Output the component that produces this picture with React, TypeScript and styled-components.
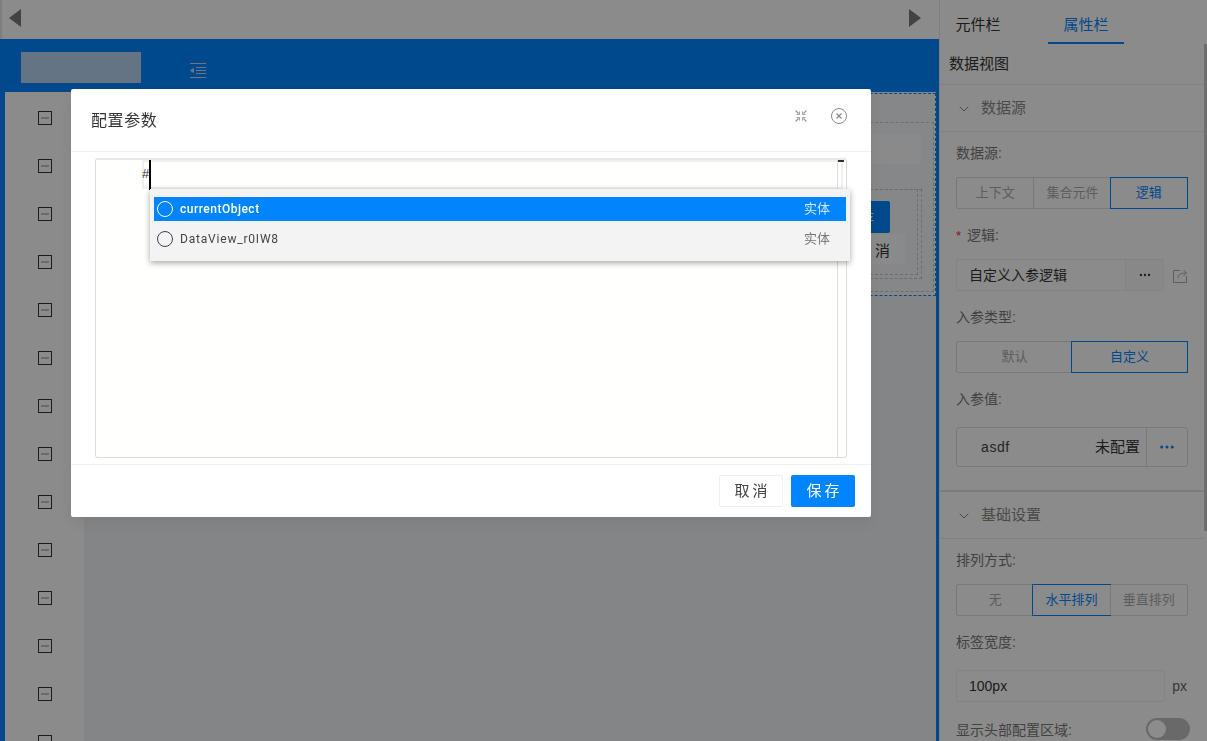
import React from 'react';
import styled, { createGlobalStyle } from 'styled-components';
import { ChevronDown, Ellipsis } from 'lucide-react';

const Global = createGlobalStyle`
    html,body{
        margin:0;
        padding:0;
        height:100%;
        overflow:hidden;
        background:#fff;
        font-family:"Liberation Sans","Noto Sans CJK SC",sans-serif;
        font-size:13px;
        color:#333;
    }
`
const Page = styled.div`
    display:flex;
    width:1207px;
    height:741px;
    overflow:hidden;
`
const Main = styled.div`
    width:939px;
    display:flex;
    flex-direction:column;
    flex-shrink:0;
`
const TopBar = styled.div`
    height:39px;
    flex-shrink:0;
    display:flex;
    align-items:center;
    justify-content:space-between;
    padding:0 18px 3px 7px;
    background:#fefefe;
    border-left:2px solid #e6e6e6;
    box-sizing:border-box;
`
const Arrow = styled.i<{ dir: 'left' | 'right' }>`
    width:0;
    height:0;
    border-top:9px solid transparent;
    border-bottom:9px solid transparent;
    border-${props => (props.dir === 'left' ? 'right' : 'left')}:12px solid #7a7a7a;
`
const Stage = styled.div`
    flex:1;
    display:flex;
    flex-direction:column;
    background:#0085ff;
    padding:0 3px 0 2px;
    min-height:0;
`
const Head = styled.div`
    height:53px;
    flex-shrink:0;
    display:flex;
    align-items:center;
    padding:0 0 0 19px;
`
const Logo = styled.div`
    width:120px;
    height:31px;
    background:#b6d4f0;
    margin-top:4px;
`
const Fold = styled.svg`
    margin-left:49px;
    margin-top:9px;
`
const Body = styled.div`
    flex:1;
    display:flex;
    min-height:0;
    padding-left:3px;
`
const Rail = styled.div`
    width:79px;
    flex-shrink:0;
    background:#fefefe;
    display:flex;
    flex-direction:column;
    align-items:center;
    gap:34px;
    padding:19px 0 0 0;
    box-sizing:border-box;
    overflow:hidden;
`
const Collapse = styled.div`
    width:14px;
    height:14px;
    flex-shrink:0;
    border:1px solid #333;
    box-sizing:border-box;
    display:flex;
    align-items:center;
    justify-content:center;
    &::after{
        content:'';
        width:8px;
        height:2px;
        background:#c4c4c4;
    }
`
const Canvas = styled.div`
    flex:1;
    background:#f0f3f5;
    min-width:0;
`
const Side = styled.div`
    flex:1;
    display:flex;
    flex-direction:column;
    background:#fefefe;
    border-left:1px solid #e8e8e8;
    min-width:0;
    position:relative;
`
const Tabs = styled.div`
    display:flex;
    height:44px;
    flex-shrink:0;
`
const Tab = styled.div<{ active?: boolean }>`
    width:76px;
    margin-left:${props => (props.active ? '32px' : '0')};
    height:44px;
    box-sizing:border-box;
    text-align:center;
    line-height:50px;
    font-size:15px;
    color:${props => (props.active ? '#0085ff' : '#333')};
    border-bottom:${props => (props.active ? '2px solid #0085ff' : 'none')};
`
const ViewName = styled.div`
    height:40px;
    line-height:40px;
    padding-left:9px;
    font-size:15px;
    color:#333;
    flex-shrink:0;
`
const Section = styled.div<{ thick?: boolean }>`
    border-top:${props => (props.thick ? '2px solid #e2e2e2' : '1px solid #ececec')};
    margin-right:3px;
    flex-shrink:0;
`
const SectionHead = styled.div`
    height:47px;
    display:flex;
    align-items:center;
    padding:0 0 3px 16px;
    gap:9px;
    font-size:15px;
    color:#888;
    border-bottom:1px solid #ececec;
    box-sizing:border-box;
    & svg{
        margin-top:5px;
    }
`
const SectionBody = styled.div`
    padding:0 16px 0 16px;
`
const Label = styled.div`
    line-height:20px;
    height:20px;
    margin:16px 0 14px;
    font-size:14px;
    color:#777;
    &:first-child{
        margin-top:11px;
    }
`
const Segments = styled.div`
    display:flex;
    height:32px;
    border:1px solid #ddd;
    border-radius:2px;
    box-sizing:border-box;
`
const Segment = styled.div<{ active?: boolean }>`
    flex:1;
    margin:${props => (props.active ? '-1px' : '0')};
    border:${props => (props.active ? '1px solid #0085ff' : 'none')};
    border-left:1px solid ${props => (props.active ? '#0085ff' : '#ddd')};
    &:first-child{
        border-left:none;
    }
    text-align:center;
    line-height:30px;
    font-size:13px;
    color:${props => (props.active ? '#0085ff' : '#aaa')};
    position:relative;
`
const LogicRow = styled.div`
    display:flex;
    align-items:center;
`
const LogicInput = styled.div`
    width:208px;
    height:32px;
    display:flex;
    border:1px solid #eee;
    border-radius:2px;
    box-sizing:border-box;
`
const LogicText = styled.div`
    flex:1;
    padding-left:12px;
    line-height:30px;
    font-size:14px;
    color:#333;
`
const LogicBtn = styled.div`
    width:37px;
    background:#f7f7f7;
    border-left:1px solid #eee;
    display:flex;
    align-items:center;
    justify-content:center;
    color:#333;
`
const Share = styled.svg`
    margin-left:8px;
    margin-top:1px;
`
const Required = styled.span`
    color:#f5222d;
    margin-right:6px;
    font-size:13px;
`
const ParamBox = styled.div`
    height:40px;
    display:flex;
    border:1px solid #ddd;
    border-radius:3px;
    box-sizing:border-box;
    margin:18px 0 23px;
`
const ParamName = styled.div`
    flex:1;
    padding-left:24px;
    line-height:38px;
    font-size:14px;
    letter-spacing:.6px;
    color:#444;
`
const ParamState = styled.div`
    padding-right:6px;
    line-height:38px;
    font-size:15px;
    color:#333;
`
const ParamBtn = styled.div`
    width:40px;
    border-left:1px solid #ddd;
    display:flex;
    align-items:center;
    justify-content:center;
    color:#0085ff;
`
const UnitRow = styled.div`
    display:flex;
    align-items:center;
    justify-content:space-between;
    margin-top:18px;
`
const UnitInput = styled.div`
    width:209px;
    height:32px;
    border:1px solid #eee;
    border-radius:2px;
    box-sizing:border-box;
    padding-left:12px;
    line-height:30px;
    font-size:14px;
    color:#333;
`
const Unit = styled.span`
    font-size:14px;
    color:#666;
    padding-right:1px;
`
const SwitchRow = styled.div`
    display:flex;
    align-items:center;
    justify-content:space-between;
    height:22px;
    margin-top:16px;
    font-size:14px;
    color:#777;
`
const Toggle = styled.div`
    width:44px;
    height:22px;
    border-radius:11px;
    background:#bfbfbf;
    padding:2px;
    box-sizing:border-box;
    margin-right:-2px;
    &::after{
        content:'';
        display:block;
        width:18px;
        height:18px;
        border-radius:50%;
        background:#fff;
    }
`
const Scroll = styled.div`
    position:absolute;
    right:0;
    top:44px;
    width:3px;
    height:487px;
    background:#c9c9c9;
`
const Backdrop = styled.div`
    position:fixed;
    inset:0;
    background:rgba(0,0,0,.45);
`
const Ghost = styled.div`
    position:absolute;
    left:860px;
    top:93px;
    width:76px;
    height:203px;
    background:#f5f6f7;
    border:1px dashed #0085ff;
    border-left:none;
    box-sizing:border-box;
`
const GhostFrame = styled.div`
    position:absolute;
    left:0;
    top:28px;
    width:74px;
    height:170px;
    border:1px dashed #c9c9c9;
    border-left:none;
    box-sizing:border-box;
`
const GhostField = styled.div`
    position:absolute;
    left:0;
    top:40px;
    width:61px;
    height:30px;
    background:#fbfbfb;
`
const GhostBox = styled.div<{ inner?: boolean }>`
    position:absolute;
    left:0;
    top:95px;
    width:${props => (props.inner ? '58px' : '62px')};
    height:${props => (props.inner ? '86px' : '90px')};
    border:1px dashed #c9c9c9;
    border-left:none;
    box-sizing:border-box;
`
const GhostPrimary = styled.div`
    position:absolute;
    left:0;
    top:107px;
    width:30px;
    height:32px;
    padding-right:16px;
    box-sizing:border-box;
    display:flex;
    align-items:center;
    justify-content:flex-end;
    background:#0085ff;
    border-radius:0 2px 2px 0;
    color:#fff;
    font-size:14px;
    white-space:nowrap;
`
const GhostCancel = styled.div`
    position:absolute;
    left:0;
    top:140px;
    width:45px;
    height:30px;
    padding-right:15px;
    box-sizing:border-box;
    display:flex;
    align-items:center;
    justify-content:flex-end;
    background:#fbfbfb;
    color:#333;
    font-size:15px;
    white-space:nowrap;
`
const Modal = styled.div`
    position:fixed;
    left:71px;
    top:89px;
    width:800px;
    height:428px;
    background:#fff;
    border-radius:2px;
    box-shadow:0 6px 16px rgba(0,0,0,.08);
    display:flex;
    flex-direction:column;
`
const ModalHead = styled.div`
    height:63px;
    flex-shrink:0;
    box-sizing:border-box;
    display:flex;
    align-items:center;
    justify-content:space-between;
    padding:0 24px 0 20px;
    border-bottom:1px solid #f0f0f0;
`
const ModalTitle = styled.div`
    font-size:16px;
    letter-spacing:.6px;
    color:#333;
    margin-top:-2px;
`
const ModalTools = styled.div`
    display:flex;
    align-items:center;
    gap:24px;
    margin-top:-8px;
`
const ModalBody = styled.div`
    flex:1;
    padding:6px 24px;
    min-height:0;
    position:relative;
`
const Editor = styled.div`
    height:100%;
    border:1px solid #ddd;
    border-top:2px solid #e8e8e8;
    border-radius:3px;
    box-sizing:border-box;
    background:#fffffd;
    display:flex;
`
const Gutter = styled.div`
    width:46px;
    flex-shrink:0;
`
const CodeArea = styled.div`
    flex:1;
    min-width:0;
`
const ActiveLine = styled.div`
    height:29px;
    margin-right:-6px;
    background:#fffffd;
    border:2px solid #f0f0f0;
    border-top-width:2px;
    box-sizing:border-box;
    display:flex;
    align-items:center;
    font-size:13px;
    color:#333;
`
const Caret = styled.i`
    display:block;
    width:2px;
    height:30px;
    background:#000;
    margin-left:-1px;
    flex-shrink:0;
`
const Hash = styled.span`
    width:8px;
    margin:-3px 0 0 -2px;
    font-size:13px;
    flex-shrink:0;
`
const MiniRail = styled.div`
    width:8px;
    flex-shrink:0;
    border-left:1px solid #ddd;
    position:relative;
    &::before{
        content:'';
        position:absolute;
        left:0;
        top:0;
        width:6px;
        height:2px;
        background:#333;
    }
`
const Suggest = styled.div`
    position:absolute;
    left:79px;
    top:37px;
    width:700px;
    height:72px;
    box-sizing:border-box;
    padding:8px 4px 0 4px;
    background:#f3f3f3;
    box-shadow:0 2px 6px rgba(0,0,0,.35);
`
const Option = styled.div<{ active?: boolean }>`
    height:24px;
    display:flex;
    align-items:center;
    padding:0 16px 0 3px;
    margin-bottom:6px;
    background:${props => (props.active ? '#0085ff' : 'transparent')};
    color:${props => (props.active ? '#fff' : '#444')};
`
const OptionIcon = styled.i<{ active?: boolean }>`
    width:16px;
    height:16px;
    border-radius:50%;
    border:1px solid ${props => (props.active ? '#fff' : '#3c3f52')};
    box-sizing:border-box;
    margin-right:7px;
    flex-shrink:0;
`
const OptionName = styled.span<{ active?: boolean }>`
    flex:1;
    font-family:Roboto,"Liberation Sans",sans-serif;
    font-size:12px;
    font-weight:${props => (props.active ? 500 : 400)};
    letter-spacing:${props => (props.active ? '.5px' : '.8px')};
`
const OptionType = styled.span<{ active?: boolean }>`
    font-size:13px;
    margin-top:-3px;
    color:${props => (props.active ? '#cfe7ff' : '#777')};
`
const ModalFoot = styled.div`
    height:53px;
    flex-shrink:0;
    box-sizing:border-box;
    display:flex;
    justify-content:flex-end;
    align-items:center;
    gap:8px;
    padding:0 16px 0 0;
    border-top:1px solid #f0f0f0;
`
const FootBtn = styled.div<{ primary?: boolean }>`
    width:64px;
    height:32px;
    box-sizing:border-box;
    border-radius:2px;
    text-align:center;
    font-size:15px;
    letter-spacing:3px;
    text-indent:3px;
    line-height:${props => (props.primary ? '32px' : '30px')};
    background:${props => (props.primary ? '#0085ff' : '#fff')};
    color:${props => (props.primary ? '#fff' : '#444')};
    border:${props => (props.primary ? 'none' : '1px solid #eee')};
`

const rows = Array.from({ length: 14 }, (_, i) => i)

const App = () => {
    return (
        <>
            <Global />
            <Page>
                <Main>
                    <TopBar>
                        <Arrow dir="left" />
                        <Arrow dir="right" />
                    </TopBar>
                    <Stage>
                        <Head>
                            <Logo />
                            <Fold width="16" height="15" viewBox="0 0 16 15" fill="none" stroke="#c4d8ec" strokeWidth="1">
                                <path d="M0 .5h16M6 4.500h10M6 7.500h10M6 10.500h10M0 14.500h16" />
                                <path d="M3.500 5.500v4l-3-2z" fill="#c4d8ec" />
                            </Fold>
                        </Head>
                        <Body>
                            <Rail>
                                {rows.map(i => <Collapse key={i} />)}
                            </Rail>
                            <Canvas />
                        </Body>
                    </Stage>
                </Main>
                <Side>
                    <Tabs>
                        <Tab>元件栏</Tab>
                        <Tab active>属性栏</Tab>
                    </Tabs>
                    <ViewName>数据视图</ViewName>
                    <Section>
                        <SectionHead><ChevronDown size={16} strokeWidth={1.5} />数据源</SectionHead>
                        <SectionBody>
                            <Label>数据源:</Label>
                            <Segments>
                                <Segment>上下文</Segment>
                                <Segment>集合元件</Segment>
                                <Segment active>逻辑</Segment>
                            </Segments>
                            <Label><Required>*</Required>逻辑:</Label>
                            <LogicRow>
                                <LogicInput>
                                    <LogicText>自定义入参逻辑</LogicText>
                                    <LogicBtn><Ellipsis size={14} /></LogicBtn>
                                </LogicInput>
                                <Share width="16" height="16" viewBox="0 0 16 16" fill="none" stroke="#aaa" strokeWidth="1">
                                    <path d="M8 2.500H1.500v12h13V8" />
                                    <path d="M6 10c0-3 2-5 8-5M11.500 2l3 3-3 3" />
                                </Share>
                            </LogicRow>
                            <Label>入参类型:</Label>
                            <Segments>
                                <Segment>默认</Segment>
                                <Segment active>自定义</Segment>
                            </Segments>
                            <Label>入参值:</Label>
                            <ParamBox>
                                <ParamName>asdf</ParamName>
                                <ParamState>未配置</ParamState>
                                <ParamBtn><Ellipsis size={18} /></ParamBtn>
                            </ParamBox>
                        </SectionBody>
                    </Section>
                    <Section thick>
                        <SectionHead><ChevronDown size={16} strokeWidth={1.5} />基础设置</SectionHead>
                        <SectionBody>
                            <Label>排列方式:</Label>
                            <Segments>
                                <Segment>无</Segment>
                                <Segment active>水平排列</Segment>
                                <Segment>垂直排列</Segment>
                            </Segments>
                            <Label>标签宽度:</Label>
                            <UnitRow>
                                <UnitInput>100px</UnitInput>
                                <Unit>px</Unit>
                            </UnitRow>
                            <SwitchRow>显示头部配置区域:<Toggle /></SwitchRow>
                        </SectionBody>
                    </Section>
                    <Scroll />
                </Side>
            </Page>
            <Ghost>
                <GhostFrame />
                <GhostField />
                <GhostBox />
                <GhostBox inner />
                <GhostPrimary>存</GhostPrimary>
                <GhostCancel>取 消</GhostCancel>
            </Ghost>
            <Backdrop />
            <Modal>
                <ModalHead>
                    <ModalTitle>配置参数</ModalTitle>
                    <ModalTools>
                        <svg width="12" height="12" viewBox="0 0 12 12" fill="none" stroke="#999" strokeWidth="1.2">
                            <path d="M.5.500l3 3M11.500.500l-3 3M.5 11.500l3-3M11.500 11.500l-3-3" />
                            <path d="M1.500 4.500h3v-3M10.500 4.500h-3v-3M1.500 7.500h3v3M10.500 7.500h-3v3" strokeWidth=".9" />
                        </svg>
                        <svg width="16" height="16" viewBox="0 0 16 16" fill="none" stroke="#8a8a8a" strokeWidth="1">
                            <circle cx="8" cy="8" r="7.500" />
                            <path d="M5.500 5.500l5 5M10.500 5.500l-5 5" strokeWidth="1.200" />
                        </svg>
                    </ModalTools>
                </ModalHead>
                <ModalBody>
                    <Editor>
                        <Gutter />
                        <CodeArea>
                            <ActiveLine>
                                <Hash>#</Hash>
                                <Caret />
                            </ActiveLine>
                        </CodeArea>
                        <MiniRail />
                    </Editor>
                    <Suggest>
                        <Option active>
                            <OptionIcon active />
                            <OptionName active>currentObject</OptionName>
                            <OptionType active>实体</OptionType>
                        </Option>
                        <Option>
                            <OptionIcon />
                            <OptionName>DataView_r0IW8</OptionName>
                            <OptionType>实体</OptionType>
                        </Option>
                    </Suggest>
                </ModalBody>
                <ModalFoot>
                    <FootBtn>取消</FootBtn>
                    <FootBtn primary>保存</FootBtn>
                </ModalFoot>
            </Modal>
        </>
    )
}

export default App;
